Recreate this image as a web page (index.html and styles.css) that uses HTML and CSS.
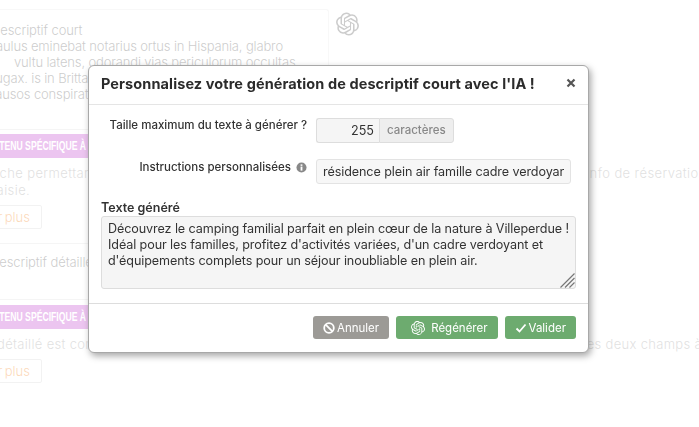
FILE: index.html
```html
<!DOCTYPE html>
<html lang="fr">
<head>
  <meta charset="UTF-8" />
  <title>Descriptif</title>
  <link rel="stylesheet" href="styles.css">
</head>
<body>
  <svg class="sprites" width="0" height="0">
    <symbol id="knot" viewBox="0 0 24 24">
      <path d="M22.2819 9.8211a5.9847 5.9847 0 0 0-.5157-4.9108 6.0462 6.0462 0 0 0-6.5098-2.9A6.0651 6.0651 0 0 0 4.9807 4.1818a5.9847 5.9847 0 0 0-3.9977 2.9 6.0462 6.0462 0 0 0 .7427 7.0966 5.98 5.98 0 0 0 .511 4.9107 6.051 6.051 0 0 0 6.5146 2.9001A5.9847 5.9847 0 0 0 13.2599 24a6.0557 6.0557 0 0 0 5.7718-4.2058 5.9894 5.9894 0 0 0 3.9977-2.9001 6.0557 6.0557 0 0 0-.7475-7.0729zm-9.022 12.6081a4.4755 4.4755 0 0 1-2.8764-1.0408l.1419-.0804 4.7783-2.7582a.7948.7948 0 0 0 .3927-.6813v-6.7369l2.02 1.1686a.071.071 0 0 1 .038.052v5.5826a4.504 4.504 0 0 1-4.4945 4.4944zm-9.6607-4.1254a4.4708 4.4708 0 0 1-.5346-3.0137l.142.0852 4.783 2.7582a.7712.7712 0 0 0 .7806 0l5.8428-3.3685v2.3324a.0804.0804 0 0 1-.0332.0615L9.74 19.9502a4.4992 4.4992 0 0 1-6.1408-1.6464zM2.3408 7.8956a4.485 4.485 0 0 1 2.3655-1.9728V11.6a.7664.7664 0 0 0 .3879.6765l5.8144 3.3543-2.0201 1.1685a.0757.0757 0 0 1-.071 0l-4.8303-2.7865A4.504 4.504 0 0 1 2.3408 7.872zm16.5963 3.8558L13.1038 8.364 15.1192 7.2a.0757.0757 0 0 1 .071 0l4.8303 2.7913a4.4944 4.4944 0 0 1-.6765 8.1042v-5.6772a.79.79 0 0 0-.407-.667zm2.0107-3.0231l-.142-.0852-4.7735-2.7818a.7759.7759 0 0 0-.7854 0L9.409 9.2297V6.8974a.0662.0662 0 0 1 .0284-.0615l4.8303-2.7866a4.4992 4.4992 0 0 1 6.6802 4.66zM8.3065 12.863l-2.02-1.1638a.0804.0804 0 0 1-.038-.0567V6.0742a4.4992 4.4992 0 0 1 7.3757-3.4537l-.142.0805L8.704 5.459a.7948.7948 0 0 0-.3927.6813zm1.0976-2.3654l2.602-1.4998 2.6069 1.4998v2.9994l-2.5974 1.4997-2.6067-1.4997Z"/>
    </symbol>
  </svg>

  <div class="page">
    <div class="page-inner">
      <div class="field-row">
        <div class="field-box">
          <div class="field-title">Descriptif court</div>
          <div class="field-text">Paulus eminebat notarius ortus in Hispania, glabro<br>
            <span class="indent">vultu latens, odorandi vias periculorum occultas.</span><br>
            <span class="indent-small">fugax. is in Brittania</span><br>
            causos conspirationum</div>
        </div>
        <svg class="field-icon"><use href="#knot"/></svg>
      </div>
      <div class="tag"><span>CONTENU SPÉCIFIQUE À L'IA</span></div>
      <p class="note">Fiche permettant d'afficher le descriptif court de l'établissement, pour donner ensuite toute l'info de réservation<br>Saisie.</p>
      <a class="more">Voir plus</a>

      <div class="field-row second">
        <div class="field-title">Descriptif détaillé</div>
      </div>
      <div class="tag"><span>CONTENU SPÉCIFIQUE À L'IA</span></div>
      <p class="note note-cut">détaillé est complémentaire de ce descriptif court, il est donc vivement conseillé de remplir ces deux champs à la fois</p>
      <a class="more">Voir plus</a>
    </div>
  </div>

  <div class="backdrop"></div>

  <div class="modal">
    <div class="modal-head">
      <h3>Personnalisez votre génération de descriptif court avec l'IA !</h3>
      <svg class="close" viewBox="0 0 10 10"><path d="M1.5 1.5l7 7M8.5 1.5l-7 7"/></svg>
    </div>
    <div class="modal-body">
      <div class="form-row">
        <label>Taille maximum du texte à générer ?</label>
        <div class="size-group">
          <input class="size-input" type="text" value="255">
          <span class="size-unit">caractères</span>
        </div>
      </div>
      <div class="form-row prompt-row">
        <label>Instructions personnalisées
          <svg class="info" viewBox="0 0 12 12"><circle cx="6" cy="6" r="5.5"/><rect x="5" y="5" width="2" height="4.4" fill="#fff"/><rect x="5" y="2.6" width="2" height="1.6" fill="#fff"/></svg>
        </label>
        <input class="prompt-input" type="text" value="résidence plein air famille cadre verdoyant">
      </div>
      <div class="result-title">Texte généré</div>
      <div class="result-wrap">
        <textarea class="result" spellcheck="false">Découvrez le camping familial parfait en plein cœur de la nature à Villeperdue ! Idéal pour les familles, profitez d'activités variées, d'un cadre verdoyant et d'équipements complets pour un séjour inoubliable en plein air.</textarea>
        <svg class="grip" viewBox="0 0 15 15"><path d="M0.5 14.5l14-14M5 14.5l9.5-9.5M9.5 14.5l5-5"/></svg>
      </div>
    </div>
    <div class="modal-foot">
      <button class="btn btn-grey">
        <svg class="btn-icon" viewBox="0 0 12 12"><circle cx="6" cy="6" r="4.8"/><path d="M2.6 2.6l6.8 6.8"/></svg>
        Annuler
      </button>
      <button class="btn btn-green regen">
        <svg class="knot-icon"><use href="#knot"/></svg>
        Régénérer
      </button>
      <button class="btn btn-green">
        <svg class="btn-icon" viewBox="0 0 12 12"><path d="M1.5 6.5l3 3 6-7"/></svg>
        Valider
      </button>
    </div>
  </div>
</body>
</html>
```

FILE: styles.css
```css
html, body {
  margin: 0;
  height: 100%;
  overflow: hidden;
}

body {
  background: #fff;
  color: #333;
  font-family: 'Inter', 'Liberation Sans', sans-serif;
  font-size: 13px;
}

.sprites {
  display: block;
}

/* page behind the modal */
.page {
  height: 100%;
  overflow: hidden;
}

.page-inner {
  margin-left: -12px;
  padding-top: 9px;
  white-space: nowrap;
  font-weight: 300;
  color: #555;
}

.field-row {
  display: flex;
  align-items: flex-start;
  gap: 7px;
  border-bottom: 1px solid #ddd;
  width: 341px;
  height: 120px;
  margin-bottom: 4px;
}

.field-row.second {
  display: block;
  box-sizing: border-box;
  height: 57px;
  margin-top: 14px;
  margin-bottom: 5px;
  padding-top: 10px;
  border-top: 1px solid #ddd;
}

.field-box {
  flex: none;
  box-sizing: border-box;
  width: 341px;
  height: 120px;
  padding-top: 12px;
  border: 1px solid #e6e6e6;
  border-bottom: 0;
  border-radius: 3px 3px 0 0;
  line-height: 16px;
}

.field-title {
  margin-left: 2px;
  line-height: 16px;
  letter-spacing: -0.1px;
}

.field-text {
  margin-left: -1px;
  letter-spacing: -0.15px;
}

.indent {
  margin-left: 26px;
}

.indent-small {
  margin-left: 3px;
}

.field-icon {
  flex: none;
  width: 23px;
  height: 24px;
  margin-top: 3px;
  fill: #555;
}

.tag {
  width: 420px;
  height: 24px;
  padding-left: 12px;
  box-sizing: border-box;
  background: #c03ecd;
  color: #fff;
  font-family: 'Liberation Sans', sans-serif;
  font-size: 12px;
  font-weight: 700;
  line-height: 24px;
  overflow: hidden;
}

.tag span {
  display: inline-block;
  margin-left: -20px;
  transform: scaleX(0.72);
  transform-origin: 0 50%;
}

.note {
  margin: 7px 0 6px;
  color: #999;
  line-height: 17px;
  letter-spacing: 0.4px;
}

.note-cut {
  margin-left: 9px;
  letter-spacing: 0.32px;
}

.more {
  display: block;
  width: 40px;
  height: 22px;
  padding-left: 12px;
  border: 1px solid #d4d4d4;
  border-radius: 2px;
  color: #f28012;
  line-height: 22px;
  text-indent: -22px;
  word-spacing: -1.5px;
  overflow: hidden;
}

.backdrop {
  position: fixed;
  inset: 0;
  background: rgba(255, 255, 255, 0.7);
}

/* modal */
.modal {
  position: fixed;
  left: 88px;
  top: 65px;
  width: 501px;
  height: 288px;
  box-sizing: border-box;
  display: flex;
  flex-direction: column;
  background: #fff;
  border: 1px solid #a8a8a8;
  border-radius: 6px;
  box-shadow: 2px 3px 7px rgba(0, 0, 0, 0.35);
}

.modal-head {
  display: flex;
  align-items: center;
  justify-content: space-between;
  box-sizing: border-box;
  height: 39px;
  padding: 0 12px 4px 12px;
  border-bottom: 1px solid #e5e5e5;
}

.modal-head h3 {
  margin: 0;
  font-size: 14.5px;
  font-weight: 700;
  color: #2b2b2b;
  letter-spacing: 0.1px;
  white-space: nowrap;
}

.close {
  width: 10px;
  height: 10px;
  fill: none;
  stroke: #555;
  stroke-width: 2.2;
}

.modal-body {
  flex: 1;
  padding: 13px 12px 0 12px;
}

.form-row {
  display: flex;
  justify-content: flex-end;
  align-items: flex-start;
}

.form-row label {
  display: flex;
  align-items: center;
  gap: 5px;
  margin-right: 9px;
  font-size: 11.5px;
  font-weight: 500;
  line-height: 14px;
  color: #333;
  white-space: nowrap;
}

.size-group {
  display: flex;
  width: 260px;
}

.size-input {
  width: 63px;
  height: 25px;
  box-sizing: border-box;
  padding: 0 5px 0 0;
  border: 1px solid #ddd;
  border-right: 0;
  border-radius: 3px 0 0 3px;
  background: #f5f5f5;
  color: #333;
  font: 400 12.6px 'Inter', sans-serif;
  text-align: right;
}

.size-unit {
  height: 25px;
  box-sizing: border-box;
  padding: 0 7px;
  border: 1px solid #ddd;
  border-radius: 0 3px 3px 0;
  background: #eee;
  color: #888;
  font-size: 11.5px;
  font-weight: 500;
  line-height: 22px;
}

.prompt-row {
  margin-top: 16px;
  margin-right: 5px;
}

.prompt-row label {
  margin-top: 1px;
}

.prompt-input {
  width: 255px;
  height: 25px;
  box-sizing: border-box;
  padding: 0 6px;
  border: 1px solid #e3e3e3;
  border-radius: 3px;
  background: #f7f7f7;
  color: #333;
  font: 400 12.6px 'Inter', sans-serif;
  letter-spacing: -0.1px;
}

.info {
  width: 11px;
  height: 11px;
  fill: #888;
}

.result-title {
  margin-top: 16px;
  font-size: 12.5px;
  font-weight: 600;
  line-height: 16px;
  color: #333;
}

.result-wrap {
  position: relative;
}

.result {
  display: block;
  width: 475px;
  height: 73px;
  box-sizing: border-box;
  margin: 0;
  padding: 4px 6px;
  border: 1px solid #ddd;
  border-radius: 3px;
  background: #f5f5f5;
  color: #333;
  font: 400 12.6px/16px 'Inter', sans-serif;
  letter-spacing: -0.1px;
  resize: none;
  overflow: hidden;
}

.grip {
  position: absolute;
  right: 1px;
  bottom: 1px;
  width: 15px;
  height: 15px;
  fill: none;
  stroke: #777;
  stroke-width: 1.2;
}

.modal-foot {
  display: flex;
  justify-content: flex-end;
  gap: 7px;
  height: 49px;
  box-sizing: border-box;
  padding: 12px 12px 0 0;
  border-top: 1px solid #ddd;
}

.btn {
  display: flex;
  align-items: center;
  gap: 2px;
  height: 23px;
  padding: 0 10px;
  border: 0;
  border-radius: 3px;
  color: #fff;
  font: 400 11.5px 'Inter', sans-serif;
}

.btn-grey {
  background: #9c9a96;
}

.btn-green {
  background: #6dab6f;
}

.regen {
  gap: 6px;
  padding: 0 10px 0 15px;
}

.btn-icon {
  width: 12px;
  height: 12px;
  fill: none;
  stroke: #fff;
  stroke-width: 1.8;
}

.knot-icon {
  width: 14px;
  height: 14px;
  fill: #fff;
}
```
